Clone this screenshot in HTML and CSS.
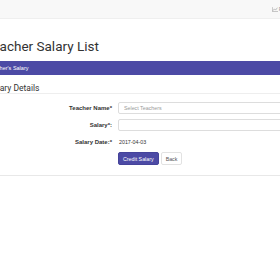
FILE: index.html
```html
<!DOCTYPE html>
<html lang="en">
<head>
    <meta charset="UTF-8">
    <meta name="viewport" content="width=device-width, initial-scale=1.0">
    <title>Teacher Salary List</title>
    <link rel="stylesheet" href="styles.css">
</head>
<body>
    <div class="topbar">
        <span class="topbar-link">
            <svg class="topbar-icon" viewBox="0 0 10 8" width="6" height="5"><path d="M0.5 0v7.5h9.5" fill="none" stroke="#9a9a9a" stroke-width="1"/><path d="M1.5 6l2.5-3 2 2 3-4" fill="none" stroke="#9a9a9a" stroke-width="1"/></svg>
            Reports
        </span>
    </div>
    <div class="page">
        <h1 class="page-title">Teacher Salary List</h1>
        <div class="crumb">Teacher's Salary</div>
        <div class="panel">
            <div class="panel-title">Salary Details</div>
            <form class="salary-form" onsubmit="return false">
                <label class="form-label">Teacher Name*</label>
                <div class="form-control"><input type="text" class="field" placeholder="Select Teachers"></div>
                <label class="form-label">Salary*:</label>
                <div class="form-control"><input type="text" class="field"></div>
                <label class="form-label">Salary Date:*</label>
                <div class="form-value">2017-04-03</div>
                <div></div>
                <div class="form-actions">
                    <button class="btn btn-primary">Credit Salary</button>
                    <button class="btn btn-default">Back</button>
                </div>
            </form>
        </div>
    </div>
</body>
</html>
```

FILE: styles.css
```css
html, body {
    margin: 0;
    overflow: hidden;
}
body {
    font-family: "Liberation Sans", Arial, sans-serif;
    background: #fff;
    color: #333;
}
.topbar {
    height: 18px;
    background: #f8f8f8;
    border-bottom: 1px solid #efefef;
    display: flex;
    justify-content: flex-end;
    align-items: center;
    overflow: hidden;
}
.topbar-link {
    font-size: 5.5px;
    color: #9a9a9a;
    white-space: nowrap;
    margin-right: -18px;
    display: flex;
    align-items: center;
    gap: 1px;
}
.page {
    margin-left: -15px;
}
.page-title {
    font-family: Roboto, sans-serif;
    font-weight: 400;
    font-size: 13.5px;
    line-height: 16px;
    color: #333;
    margin: 19px 0 7px;
}
.crumb {
    height: 14px;
    line-height: 14px;
    background: #4c4aa5;
    color: #fff;
    font-size: 5.5px;
    padding-left: 3px;
    white-space: nowrap;
}
.panel {
    margin-top: 8px;
    border-bottom: 1px solid #e8e8e8;
    padding-bottom: 10px;
}
.panel-title {
    font-family: Roboto, sans-serif;
    font-size: 8.5px;
    line-height: 10px;
    color: #333;
    padding-left: 3px;
    border-bottom: 1px solid #eee;
}
.salary-form {
    display: grid;
    grid-template-columns: 127px 200px;
    column-gap: 6px;
    row-gap: 5px;
    align-items: center;
    margin-top: 8px;
}
.form-label {
    text-align: right;
    font-weight: bold;
    font-size: 6px;
    color: #333;
}
.field {
    display: block;
    box-sizing: border-box;
    width: 100%;
    height: 12px;
    border: 1px solid #ddd;
    border-radius: 2px;
    padding: 0 5px;
    font-family: inherit;
    font-size: 5.3px;
    color: #555;
    outline: none;
}
.field::placeholder {
    color: #9a9a9a;
}
.form-value {
    font-size: 5.3px;
    line-height: 12px;
    padding-left: 1px;
    color: #333;
}
.form-actions {
    display: flex;
    gap: 2px;
    margin-top: -1px;
}
.btn {
    height: 13px;
    padding: 0 4px;
    font-family: inherit;
    font-size: 5.3px;
    border-radius: 2px;
    cursor: pointer;
}
.btn-primary {
    background: #4c4aa5;
    border: 1px solid #45439a;
    color: #fff;
}
.btn-default {
    background: #fff;
    border: 1px solid #e2e2e2;
    color: #555;
}
```
